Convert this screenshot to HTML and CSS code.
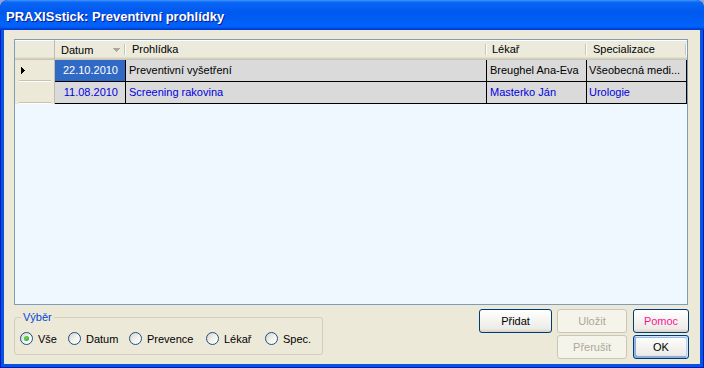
FILE: index.html
```html
<!DOCTYPE html>
<html lang="cs">
<head>
<meta charset="utf-8">
<title>PRAXISstick: Preventivní prohlídky</title>
<link rel="stylesheet" href="styles.css">
</head>
<body>
<div class="window">
  <div class="titlebar"><span class="title">PRAXISstick: Preventivní prohlídky</span></div>
  <div class="frame">
    <div class="grid">
      <div class="hrow">
        <div class="hc rh"></div>
        <div class="hc w-date sep">
          <span>Datum</span>
          <svg class="sort" width="7" height="4" viewBox="0 0 7 4"><path d="M0 0h7v1h-1v1h-1v1h-1v1h-1v-1h-1v-1h-1v-1h-1z" fill="#aca899"/></svg>
        </div>
        <div class="hc w-exam sep">Prohlídka</div>
        <div class="hc w-doc sep">Lékař</div>
        <div class="hc w-spec sep">Specializace</div>
      </div>
      <div class="row">
        <div class="rh rsep"><svg width="4" height="7" viewBox="0 0 4 7"><path d="M0 0h1v1h1v1h1v1h1v1h-1v1h-1v1h-1v1h-1z" fill="#000"/></svg></div>
        <div class="cell w-date num sel">22.10.2010</div>
        <div class="cell w-exam">Preventivní vyšetření</div>
        <div class="cell w-doc">Breughel Ana-Eva</div>
        <div class="cell w-spec">Všeobecná medi...</div>
      </div>
      <div class="row blue">
        <div class="rh rsep"></div>
        <div class="cell w-date num">11.08.2010</div>
        <div class="cell w-exam">Screening rakovina</div>
        <div class="cell w-doc">Masterko Ján</div>
        <div class="cell w-spec">Urologie</div>
      </div>
    </div>
    <div class="bottom">
      <fieldset class="group">
        <legend>Výběr</legend>
        <div class="radios">
          <label class="opt"><span class="radio on"></span>Vše</label>
          <label class="opt"><span class="radio"></span>Datum</label>
          <label class="opt"><span class="radio"></span>Prevence</label>
          <label class="opt"><span class="radio"></span>Lékař</label>
          <label class="opt"><span class="radio"></span>Spec.</label>
        </div>
      </fieldset>
      <div class="buttons">
        <button class="btn b-add">Přidat</button>
        <button class="btn b-save disabled">Uložit</button>
        <button class="btn b-help pink">Pomoc</button>
        <button class="btn b-cancel disabled">Přerušit</button>
        <button class="btn b-ok default">OK</button>
      </div>
    </div>
  </div>
</div>
</body>
</html>
```
FILE: styles.css
```css
* { box-sizing: border-box; }
html, body { margin: 0; padding: 0; }
html { background: #8ea6d8; }
body {
  width: 704px;
  height: 368px;
  font-family: "Liberation Sans", Arial, sans-serif;
  font-size: 11px;
  color: #000;
}
.window {
  width: 704px;
  height: 368px;
  display: flex;
  flex-direction: column;
  background: #0019cf;
  border-radius: 8px 8px 0 0;
  overflow: hidden;
}
.titlebar {
  height: 30px;
  flex: none;
  display: flex;
  align-items: center;
  padding: 3px 0 0 6px;
  background: linear-gradient(180deg, #3d95ff 0%, #0a66f5 8%, #0058ee 40%, #0062fa 85%, #005bf5 92%, #003dd7 96%, #003dd7 100%);
}
.title {
  color: #fff;
  font-weight: bold;
  font-size: 13px;
  text-shadow: 1px 1px #0b1b8c;
}
.frame {
  flex: 1;
  margin: 0 1px 1px;
  border: 3px solid #0855dd;
  border-top: 0;
  background: #ece9d8;
  padding: 9px 12px 0 10px;
  display: flex;
  flex-direction: column;
}

/* grid */
.grid {
  flex: none;
  height: 266px;
  border: 1px solid #7f9db9;
  background: #f0f8ff;
}
.hrow, .row { display: flex; }
.hrow {
  height: 20px;
  background: #ebeadb;
  box-shadow: inset 0 1px #fff, inset 0 -1px #cbc7b8, inset 0 -2px #d6d2c2, inset 0 -3px #e2decd;
}
.rh { width: 40px; flex: none; border-right: 1px solid #c0bdad; }
.w-date { width: 71px; flex: none; }
.w-exam { width: 361px; flex: none; }
.w-doc { width: 100px; flex: none; }
.w-spec { width: 100px; flex: none; }
.hc {
  position: relative;
  line-height: 18px;
  padding-left: 6px;
  white-space: nowrap;
}
.hc.w-date {
  display: flex;
  align-items: center;
  justify-content: space-between;
  padding-right: 6px;
}
.hc.w-doc { padding-left: 5px; }
.sort { display: block; }
.sep::after {
  content: "";
  position: absolute;
  right: 1px;
  top: 4px;
  width: 1px;
  height: 11px;
  background: #c7c5b2;
  box-shadow: 1px 0 #fff;
}
.row { height: 22px; }
.row .rh {
  position: relative;
  display: flex;
  align-items: center;
  padding: 0 0 1px 6px;
  background: #ece9d8;
}
.rsep::after {
  content: "";
  position: absolute;
  left: 4px;
  right: 3px;
  bottom: 1px;
  height: 1px;
  background: #c6c3b3;
  box-shadow: 0 1px #fff;
}
.cell {
  background: #dadada;
  border-right: 1px solid #000;
  border-bottom: 1px solid #000;
  line-height: 21px;
  white-space: nowrap;
  overflow: hidden;
  padding-left: 3px;
}
.cell.num { text-align: right; padding: 0 7px 0 0; }
.cell.w-spec { padding-left: 2px; }
.cell.sel { background: #316ac5; color: #fff; }
.row.blue .cell { color: #0000e0; }

/* bottom */
.bottom {
  flex: 1;
  display: flex;
  justify-content: space-between;
  align-items: flex-start;
}
.group {
  width: 309px;
  height: 44px;
  margin: 6px 0 0 0;
  padding: 0 0 0 5px;
  border: 1px solid #d0d0bf;
  border-radius: 3px;
  min-inline-size: 0;
}
.group legend {
  color: #0046d5;
  line-height: 13px;
  padding: 0 2px;
  margin-left: 1px;
}
.radios {
  display: flex;
  align-items: center;
  height: 29px;
}
.opt {
  display: flex;
  align-items: center;
  gap: 5px;
  flex: none;
  white-space: nowrap;
}
.opt:nth-child(1) { width: 48px; }
.opt:nth-child(2) { width: 61px; }
.opt:nth-child(3) { width: 77px; }
.opt:nth-child(4) { width: 59px; }
.radio {
  position: relative;
  width: 13px;
  height: 13px;
  flex: none;
  border-radius: 50%;
  border: 1px solid #1c5180;
  background: linear-gradient(135deg, #d6d4ca 0%, #f4f3ee 55%, #fff 100%);
}
.radio.on::after {
  content: "";
  position: absolute;
  left: 3px;
  top: 3px;
  width: 5px;
  height: 5px;
  border-radius: 50%;
  background: radial-gradient(circle at 40% 40%, #5fd85f, #21a121);
}
.buttons {
  display: grid;
  grid-template-columns: 73px 71px 56px;
  grid-template-rows: 24px 24px;
  column-gap: 5px;
  row-gap: 2px;
  margin: 4px -1px 0 0;
}
.btn {
  font-family: "Liberation Sans", Arial, sans-serif;
  font-size: 11px;
  color: #000;
  border: 1px solid #003c74;
  border-radius: 3px;
  background: linear-gradient(180deg, #fff, #ecebe6 86%, #d6d0c5);
  padding: 0;
  margin: 0;
}
.b-add { grid-column: 1; grid-row: 1; }
.b-save { grid-column: 2; grid-row: 1; width: 70px; }
.b-help { grid-column: 3; grid-row: 1; }
.b-cancel { grid-column: 2; grid-row: 2; width: 70px; }
.b-ok { grid-column: 3; grid-row: 2; }
.btn.disabled {
  border-color: #c9c7ba;
  background: #f5f4ea;
  color: #aca899;
}
.btn.pink { color: #ff1493; }
.btn.default {
  box-shadow: inset -1px 1px #cee7ff, inset 1px 2px #98b8ea, inset -2px 2px #bcd4f6, inset 1px -1px #89ade4, inset 2px -2px #89ade4;
}
```
